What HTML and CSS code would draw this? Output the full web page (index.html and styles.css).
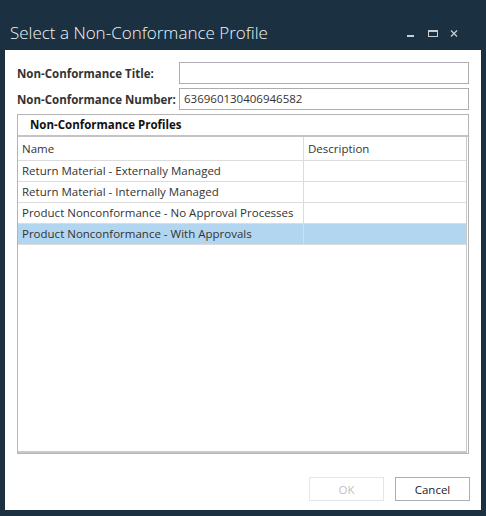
FILE: index.html
```html
<!DOCTYPE html>
<html lang="en">
<head>
  <meta charset="UTF-8" />
  <title>Select a Non-Conformance Profile</title>
  <link rel="stylesheet" href="styles.css">
</head>
<body>
<div class="titlebar">
  <span class="title">Select a Non-Conformance Profile</span>
  <div class="controls">
    <svg width="10" height="10" viewBox="0 0 10 10"><rect x="1" y="6" width="7" height="2" fill="#c9ced3"/></svg>
    <svg width="10" height="10" viewBox="0 0 10 10"><rect x="0.5" y="1.5" width="9" height="6" fill="none" stroke="#c9ced3"/><rect x="0" y="1" width="10" height="2" fill="#c9ced3"/></svg>
    <svg width="10" height="10" viewBox="0 0 10 10"><path d="M1 1.5 L7 7.5 M7 1.5 L1 7.5" stroke="#c9ced3" stroke-width="1.3"/></svg>
  </div>
</div>
<div class="panel">
  <div class="fields">
    <label>Non-Conformance Title:</label>
    <div class="input"></div>
    <label>Non-Conformance Number:</label>
    <div class="input">636960130406946582</div>
  </div>
  <div class="groupbox">
    <div class="group-header">Non-Conformance Profiles</div>
    <div class="grid">
      <div class="row head"><div class="cell name">Name</div><div class="cell">Description</div></div>
      <div class="row"><div class="cell name">Return Material - Externally Managed</div><div class="cell"></div></div>
      <div class="row"><div class="cell name">Return Material - Internally Managed</div><div class="cell"></div></div>
      <div class="row"><div class="cell name">Product Nonconformance - No Approval Processes</div><div class="cell"></div></div>
      <div class="row selected"><div class="cell name">Product Nonconformance - With Approvals</div><div class="cell"></div></div>
    </div>
  </div>
  <div class="actions">
    <button class="btn" disabled>OK</button>
    <button class="btn">Cancel</button>
  </div>
</div>
</body>
</html>
```
FILE: styles.css
```css
body {
  margin: 0;
  background: #1b3040;
  font-family: "Open Sans", sans-serif;
  font-size: 11.5px;
  color: #222;
}
.titlebar {
  height: 50px;
  display: flex;
  align-items: center;
  justify-content: space-between;
  padding: 0 26px 0 10px;
  box-sizing: border-box;
}
.title {
  color: #f2f4f6;
  font-size: 17px;
  font-weight: 300;
  margin-top: 15px;
}
.controls {
  display: flex;
  gap: 12px;
  margin-top: 17px;
}
.panel {
  background: #fff;
  margin: 0 5px;
  height: 460px;
  padding: 12px 12px 9px;
  box-sizing: border-box;
  display: flex;
  flex-direction: column;
}
.fields {
  display: grid;
  grid-template-columns: 162px 1fr;
  row-gap: 4px;
  align-items: center;
}
.fields label {
  font-weight: bold;
  color: #333;
}
.input {
  height: 22px;
  border: 1px solid #abadb3;
  box-sizing: border-box;
  padding: 0 4px;
  line-height: 20px;
  color: #333;
}
.groupbox {
  margin-top: 4px;
  height: 340px;
  border: 1px solid #b5b5b5;
  box-sizing: border-box;
  display: flex;
  flex-direction: column;
}
.group-header {
  height: 20px;
  line-height: 20px;
  padding-left: 12px;
  font-weight: bold;
  color: #111;
  border-bottom: 2px solid #c4c4c4;
}
.grid {
  flex: 1;
  margin: 0 1px 0 0;
  border-right: 1px solid #c8c8c8;
  border-bottom: 2px solid #c8c8c8;
}
.row {
  display: flex;
  height: 21px;
  box-sizing: border-box;
  border-bottom: 1px solid #dcdcdc;
}
.row.head {
  height: 24px;
}
.cell {
  flex: 1;
  padding-left: 4px;
  line-height: 20px;
  color: #333;
  white-space: nowrap;
}
.row.head .cell {
  line-height: 23px;
}
.cell.name {
  flex: 0 0 281px;
  border-right: 1px solid #dcdcdc;
}
.row.selected {
  background: #b2d6ef;
}
.actions {
  margin-top: auto;
  display: flex;
  justify-content: flex-end;
  gap: 11px;
  margin-right: -1px;
}
.btn {
  width: 75px;
  height: 24px;
  background: #fff;
  border: 1px solid #adadad;
  font-family: inherit;
  font-size: 11.5px;
  color: #222;
}
.btn:disabled {
  border-color: #e6e6e6;
  color: #c2c2c2;
}
```
